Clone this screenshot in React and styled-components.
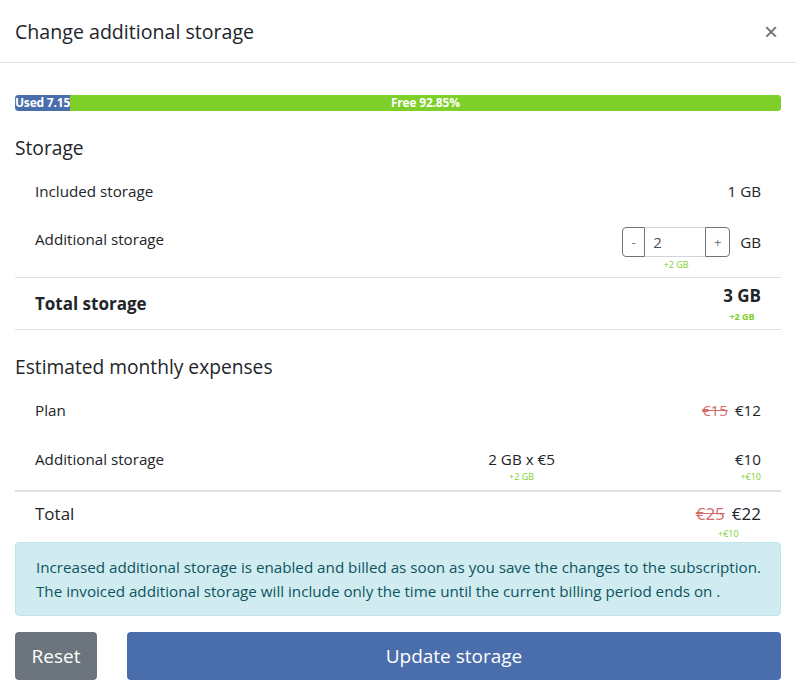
import React from 'react';
import styled, { createGlobalStyle } from 'styled-components';

const GlobalStyle = createGlobalStyle`
    html, body {
        margin: 0;
        padding: 0;
        background: #fff;
    }
    body {
        font-family: "Open Sans", "Noto Sans", sans-serif;
        color: #212529;
    }
    * { box-sizing: border-box; }
`;

const Modal = styled.div`
    width: 796px;
    background: #fff;
`;

const Header = styled.header`
    display: flex;
    justify-content: space-between;
    align-items: center;
    height: 63px;
    padding: 1px 15px 0;
    border-bottom: 1px solid #dee2e6;
`;

const Title = styled.h5`
    margin: 0;
    font-size: 19.6px;
    font-weight: 400;
    line-height: 32px;
`;

const Close = styled.button`
    border: 0;
    background: none;
    padding: 0;
    margin-right: 3px;
    font-size: 24px;
    line-height: 1;
    font-weight: 400;
    color: #6f6f6f;
    cursor: pointer;
`;

const Body = styled.div`
    padding: 32px 15px 16px;
`;

const Progress = styled.div`
    display: flex;
    height: 16px;
    border-radius: 4px;
    overflow: hidden;
    background: #7ecf2a;
    font-size: 12px;
    font-weight: 700;
    color: #fff;
    line-height: 16px;
`;

const Bar = styled.div`
    background: ${props => props.color};
    text-align: ${props => props.align || 'left'};
    white-space: nowrap;
    letter-spacing: -0.2px;
`;

const Heading = styled.h4`
    margin: ${props => props.top}px 0 7px;
    font-size: 19.2px;
    font-weight: 500;
    line-height: 24px;
`;

const Row = styled.div`
    display: flex;
    align-items: ${props => props.align || 'flex-start'};
    justify-content: space-between;
    padding: ${props => props.pad || '12px 20px'};
    border-bottom: ${props => props.border || 'none'};
    font-size: 15.2px;
    line-height: 24px;
`;

const Label = styled.span`
    font-size: ${props => props.size || 15.2}px;
    font-weight: ${props => props.bold ? 700 : 400};
`;

const Value = styled.div`
    display: flex;
    flex-direction: column;
    align-items: ${props => props.align || 'flex-end'};
`;

const Middle = styled(Value)`
    align-items: center;
    margin-left: auto;
    margin-right: 180px;
`;

const Hint = styled.span`
    color: #7ecf2a;
    font-size: 9px;
    line-height: 12px;
    font-weight: ${props => props.bold ? 700 : 400};
    margin-top: ${props => props.top || 0}px;
`;

const InputLine = styled.div`
    display: flex;
    align-items: center;
    gap: 10px;
`;

const InputGroup = styled.div`
    display: flex;
    height: 30px;
`;

const StepButton = styled.button`
    width: ${props => props.w}px;
    height: 30px;
    border: 1px solid #6c757d;
    background: #fff;
    color: #6c757d;
    font-family: inherit;
    font-size: 13px;
    padding: 0;
    border-radius: ${props => props.side === 'left' ? '4px 0 0 4px' : '0 4px 4px 0'};
`;

const NumberInput = styled.input`
    width: 60px;
    height: 30px;
    border: 1px solid #ced4da;
    border-left: 0;
    border-right: 0;
    padding: 0 8px;
    font-family: inherit;
    font-size: 15px;
    color: #495057;
    outline: none;
`;

const InputColumn = styled.div`
    display: flex;
    flex-direction: column;
    align-items: center;
`;

const Unit = styled.span`
    align-self: flex-start;
    line-height: 30px;
`;

const Prices = styled.div`
    display: flex;
    gap: 7px;
    font-size: ${props => props.size || 15.2}px;
`;

const Old = styled.s`
    color: #d36b6b;
`;

const Alert = styled.div`
    background: #d1ecf1;
    border: 1px solid #bee5eb;
    border-radius: 4px;
    color: #0c5460;
    padding: 12px 20px;
    font-size: 15.2px;
    line-height: 24px;
`;

const AlertLine = styled.p`
    margin: 0;
    white-space: nowrap;
`;

const Actions = styled.div`
    display: flex;
    gap: 30px;
    margin-top: 16px;
`;

const ActionButton = styled.button`
    flex: ${props => props.grow ? 1 : '0 0 82px'};
    height: 48px;
    border: 0;
    border-radius: 4px;
    background: ${props => props.color};
    color: #fff;
    font-family: inherit;
    font-size: 19px;
`;

const App = () => (
    <Modal>
        <GlobalStyle />
        <Header>
            <Title>Change additional storage</Title>
            <Close aria-label="Close">×</Close>
        </Header>
        <Body>
            <Progress>
                <Bar color="#4a6dac" style={{ width: '7.15%' }}>Used 7.15</Bar>
                <Bar color="#7ecf2a" align="center" style={{ flex: 1 }}>Free 92.85%</Bar>
            </Progress>

            <Heading top={25}>Storage</Heading>
            <Row>
                <Label>Included storage</Label>
                <span>1 GB</span>
            </Row>
            <Row pad="12px 20px 6px" border="1px solid #dee2e6">
                <Label>Additional storage</Label>
                <InputLine>
                    <InputColumn>
                        <InputGroup>
                            <StepButton w={23} side="left">-</StepButton>
                            <NumberInput defaultValue="2" />
                            <StepButton w={25} side="right">+</StepButton>
                        </InputGroup>
                        <Hint top={2}>+2 GB</Hint>
                    </InputColumn>
                    <Unit>GB</Unit>
                </InputLine>
            </Row>
            <Row pad="6px 20px" align="center" border="1px solid #dee2e6">
                <Label size={17} bold>Total storage</Label>
                <Value align="center">
                    <Label size={17} bold>3 GB</Label>
                    <Hint bold top={3}>+2 GB</Hint>
                </Value>
            </Row>

            <Heading top={25}>Estimated monthly expenses</Heading>
            <Row pad="12px 20px">
                <Label>Plan</Label>
                <Prices><Old>€15</Old><span>€12</span></Prices>
            </Row>
            <Row pad="13px 20px 7px" border="2px solid #dee2e6">
                <Label>Additional storage</Label>
                <Middle>
                    <span>2 GB x €5</span>
                    <Hint>+2 GB</Hint>
                </Middle>
                <Value>
                    <span>€10</span>
                    <Hint>+€10</Hint>
                </Value>
            </Row>
            <Row pad="10px 20px 2px">
                <Label size={17}>Total</Label>
                <Value align="center">
                    <Prices size={17}><Old>€25</Old><span>€22</span></Prices>
                    <Hint top={2}>+€10</Hint>
                </Value>
            </Row>

            <Alert>
                <AlertLine>Increased additional storage is enabled and billed as soon as you save the changes to the subscription.</AlertLine>
                <AlertLine>The invoiced additional storage will include only the time until the current billing period ends on .</AlertLine>
            </Alert>

            <Actions>
                <ActionButton color="#6c757d">Reset</ActionButton>
                <ActionButton color="#4a6dac" grow>Update storage</ActionButton>
            </Actions>
        </Body>
    </Modal>
);

export default App;
